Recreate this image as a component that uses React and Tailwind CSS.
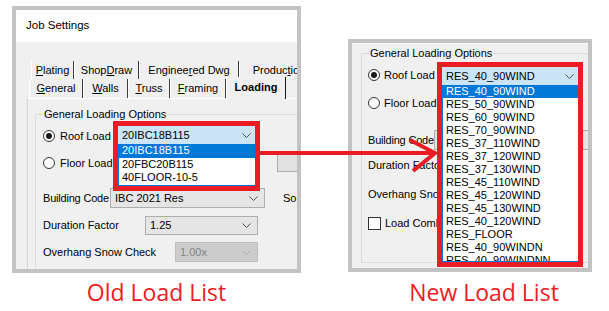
import React from "react";

function Chevron({ color = "#505050" }) {
  return (
    <svg width="9" height="5" viewBox="0 0 9 5" className="shrink-0">
      <path d="M0.5 0.5 L4.5 4.5 L8.5 0.5" fill="none" stroke={color} strokeWidth="1" />
    </svg>
  );
}

function Radio({ checked }) {
  return (
    <span className="flex h-[12px] w-[12px] shrink-0 items-center justify-center rounded-full border border-[#333333] bg-white">
      {checked && <span className="h-[6px] w-[6px] rounded-full bg-[#1a1a1a]" />}
    </span>
  );
}

function Combo({ value, className = "", disabled }) {
  return (
    <div
      className={`flex shrink-0 items-center justify-between border pl-[4px] pr-[6px] ${
        disabled
          ? "border-[#bfbfbf] bg-[#cccccc] text-[#838383]"
          : "border-[#adadad] bg-[#e5e5e5]"
      } ${className}`}
    >
      <span>{value}</span>
      <Chevron color={disabled ? "#a8a8a8" : "#505050"} />
    </div>
  );
}

function Tab({ children, className = "" }) {
  return (
    <div
      className={`flex h-full shrink-0 items-center justify-center whitespace-nowrap border-l border-r border-l-white border-r-[#3c3c3c] ${className}`}
    >
      {children}
    </div>
  );
}

function LoadDropdown({ value, items, itemClass, className }) {
  return (
    <div className={`absolute z-10 flex flex-col border-[5px] border-[#ed1c24] bg-white ${className}`}>
      <div className="flex h-[18px] shrink-0 items-center justify-between bg-[#cce4f7] pl-[4px] pr-[4px]">
        <span>{value}</span>
        <Chevron />
      </div>
      <div className="flex-1 overflow-hidden border-b border-l border-[#0078d7] bg-white">
        {items.map((it, i) => (
          <div
            key={it}
            className={`flex items-center pl-[3px] leading-none ${itemClass} ${
              i === 0 ? "bg-[#0078d7] text-white" : ""
            }`}
          >
            {it}
          </div>
        ))}
      </div>
    </div>
  );
}

function OldWindow() {
  return (
    <div className="relative h-[267px] w-[289px] overflow-hidden border-4 border-[#c3c3c3] bg-[#f0f0f0]">
      <div className="flex h-[32px] items-center bg-white pl-[10px] text-[11.5px]">Job Settings</div>

      <div className="pl-[11px] pt-[19px]">
        <div className="ml-[4px] flex h-[18px]">
          <Tab className="w-[43px]">
            <span><u>P</u>lating</span>
          </Tab>
          <Tab className="w-[65px]">
            <span>Shop<u>D</u>raw</span>
          </Tab>
          <Tab className="w-[100px]">
            <span>Enginee<u>r</u>ed Dwg</span>
          </Tab>
          <Tab className="w-[80px]">
            <span>Produc<u>t</u>ion</span>
          </Tab>
        </div>
        <div className="relative z-10 ml-[2px] flex h-[19px] items-end">
          <Tab className="w-[54px]">
            <span><u>G</u>eneral</span>
          </Tab>
          <Tab className="w-[45px]">
            <span><u>W</u>alls</span>
          </Tab>
          <Tab className="w-[42px]">
            <span><u>T</u>russ</span>
          </Tab>
          <Tab className="w-[56px]">
            <span><u>F</u>raming</span>
          </Tab>
          <div className="-mb-[1px] flex h-[22px] w-[60px] shrink-0 items-center justify-center border-l border-r border-l-white border-r-[#1a1a1a] bg-[#f0f0f0] pb-[2px] font-bold">
            Loading
          </div>
        </div>

        <div className="h-[200px] border-l border-t border-l-[#d5d5d5] border-t-white pl-[7px] pt-[8px]">
          <fieldset className="h-[170px] border border-[#dcdcdc]">
            <legend className="ml-[7px] px-[1px] leading-[14px]">General Loading Options</legend>
            <div className="flex flex-col whitespace-nowrap pl-[7px]">
              <div className="mt-[5px] flex h-[20px] items-center gap-[5px]">
                <Radio checked />
                <span>Roof Load</span>
              </div>
              <div className="mt-[7px] flex h-[20px] items-center">
                <div className="flex w-[234px] shrink-0 items-center gap-[5px]">
                  <Radio />
                  <span>Floor Load</span>
                </div>
                <div className="h-[18px] w-[30px] shrink-0 border border-[#adadad] bg-[#e1e1e1]" />
              </div>
              <div className="mt-[15px] flex h-[20px] items-center">
                <span className="w-[67px] shrink-0 tracking-[-0.2px]">Building Code</span>
                <Combo value="IBC 2021 Res" className="h-[20px] w-[155px]" />
                <span className="ml-[18px]">So</span>
              </div>
              <div className="mt-[8px] flex h-[19px] items-center">
                <span className="w-[102px] shrink-0">Duration Factor</span>
                <Combo value="1.25" className="h-[19px] w-[113px]" />
              </div>
              <div className="mt-[7px] flex h-[20px] items-center">
                <span className="w-[132px] shrink-0">Overhang Snow Check</span>
                <Combo value="1.00x" disabled className="h-[20px] w-[83px]" />
              </div>
            </div>
          </fieldset>
        </div>
      </div>

      <LoadDropdown
        value="20IBC18B115"
        items={["20IBC18B115", "20FBC20B115", "40FLOOR-10-5"]}
        itemClass="h-[13.5px]"
        className="left-[97px] top-[111px] h-[70px] w-[147px]"
      />
    </div>
  );
}

const newLoads = [
  "RES_40_90WIND",
  "RES_50_90WIND",
  "RES_60_90WIND",
  "RES_70_90WIND",
  "RES_37_110WIND",
  "RES_37_120WIND",
  "RES_37_130WIND",
  "RES_45_110WIND",
  "RES_45_120WIND",
  "RES_45_130WIND",
  "RES_40_120WIND",
  "RES_FLOOR",
  "RES_40_90WINDN",
  "RES_40_90WINDNN",
];

function NewWindow() {
  return (
    <div className="relative h-[233px] w-[244px] overflow-hidden border-4 border-[#c3c3c3] bg-[#f0f0f0]">
      <div className="border-t border-t-[#fafafa] pl-[9px] pr-[3px] pt-[2px]">
        <fieldset className="h-[217px] border border-[#dcdcdc]">
          <legend className="ml-[7px] px-[1px] leading-[14px]">General Loading Options</legend>
          <div className="flex flex-col whitespace-nowrap pl-[6px]">
            <div className="mt-[5px] flex h-[20px] items-center gap-[4px]">
              <Radio checked />
              <span>Roof Load</span>
            </div>
            <div className="mt-[8px] flex h-[20px] items-center gap-[4px]">
              <Radio />
              <span>Floor Load</span>
            </div>
            <div className="mt-[17px] flex h-[20px] items-center">
              <span className="w-[66px] shrink-0 tracking-[-0.2px]">Building Code</span>
              <Combo value="IBC 2021 Res" className="h-[20px] w-[155px]" />
            </div>
            <div className="mt-[5px] flex h-[20px] items-center">
              <span className="w-[102px] shrink-0">Duration Factor</span>
            </div>
            <div className="mt-[9px] flex h-[20px] items-center">
              <span className="w-[132px] shrink-0">Overhang Snow Check</span>
            </div>
            <div className="mt-[9px] flex h-[20px] items-center gap-[4px]">
              <span className="h-[13px] w-[13px] shrink-0 border border-[#333333] bg-white" />
              <span>Load Combinations</span>
            </div>
          </div>
        </fieldset>
      </div>

      <LoadDropdown
        value="RES_40_90WIND"
        items={newLoads}
        itemClass="h-[13px]"
        className="left-[85px] top-[19px] h-[205px] w-[146px]"
      />
    </div>
  );
}

export default function App() {
  return (
    <div className="relative h-[311px] w-[609px] overflow-hidden bg-white font-['Liberation_Sans',Arial,sans-serif] text-[11px] text-black">
      <div className="flex h-[273px] items-start">
        <div className="ml-[12px] mt-[6px]">
          <OldWindow />
        </div>
        <div className="ml-[47px] mt-[39px]">
          <NewWindow />
        </div>
      </div>

      <div className="mt-[6px] flex font-['Open_Sans',sans-serif] text-[23px] leading-[26px] text-[#ed1c24]">
        <div className="ml-[12px] w-[289px] text-center">Old Load List</div>
        <div className="ml-[108px] w-[150px] whitespace-nowrap text-center">New Load List</div>
      </div>

      <svg
        className="pointer-events-none absolute left-0 top-0 z-20"
        width="609"
        height="311"
        viewBox="0 0 609 311"
      >
        <path d="M260 153 H433" stroke="#ed1c24" strokeWidth="4" fill="none" />
        <path d="M410 140 L435 153 L413 171" stroke="#ed1c24" strokeWidth="4" fill="none" strokeLinejoin="miter" />
      </svg>
    </div>
  );
}
